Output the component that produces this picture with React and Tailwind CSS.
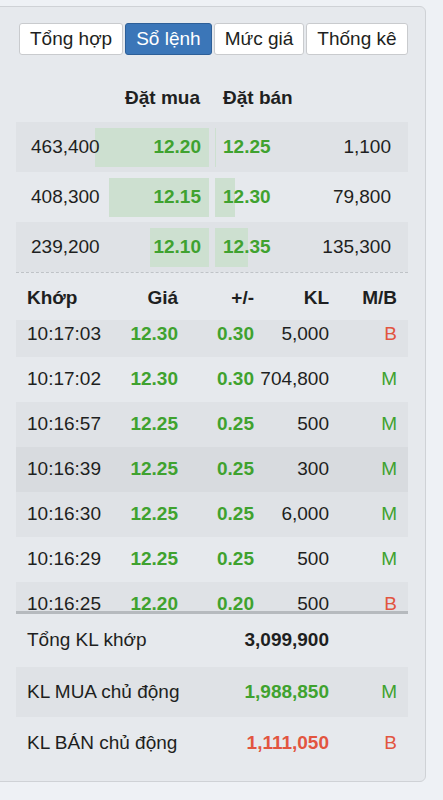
import React from 'react';

const GREEN = 'text-[#3fa22f]';
const RED = 'text-[#e2553f]';

const tabs = ['Tổng hợp', 'Sổ lệnh', 'Mức giá', 'Thống kê'];

const book = [
  { bidVol: 463400, bid: '12.20', ask: '12.25', askVol: 1100 },
  { bidVol: 408300, bid: '12.15', ask: '12.30', askVol: 79800 },
  { bidVol: 239200, bid: '12.10', ask: '12.35', askVol: 135300 },
];

const trades = [
  { t: '10:17:03', p: '12.30', c: '0.30', kl: '5,000', mb: 'B' },
  { t: '10:17:02', p: '12.30', c: '0.30', kl: '704,800', mb: 'M' },
  { t: '10:16:57', p: '12.25', c: '0.25', kl: '500', mb: 'M' },
  { t: '10:16:39', p: '12.25', c: '0.25', kl: '300', mb: 'M', hover: true },
  { t: '10:16:30', p: '12.25', c: '0.25', kl: '6,000', mb: 'M' },
  { t: '10:16:29', p: '12.25', c: '0.25', kl: '500', mb: 'M' },
  { t: '10:16:25', p: '12.20', c: '0.20', kl: '500', mb: 'B' },
];

const fmt = (n) => n.toLocaleString('en-US');
const barW = (v) => Math.max(1, Math.round((v / 785000) * 193));

const App = () => {
  return (
    <div className="min-h-[800px] overflow-hidden bg-[#eef1f5] pt-[6px] font-['Liberation_Sans',Arial,sans-serif] text-[19px] text-[#1e1f21]">
      {/* Panel */}
      <div className="-ml-[10px] h-[776px] w-[436px] rounded-[6px] border border-[#cfd2d6] bg-[#e6e9ed] pl-[25px] pr-[17px] pt-[16px]">
        {/* Tabs */}
        <div className="ml-[3px] flex gap-[2px]">
          {tabs.map((t, i) => (
            <div
              key={t}
              className={
                i === 1
                  ? 'flex h-[32px] items-center rounded-[3px] border border-[#2d5f98] bg-[#3b76b8] px-[10px] text-white'
                  : 'flex h-[32px] items-center rounded-[3px] border border-[#c9cbce] bg-white px-[10px]'
              }
            >
              {t}
            </div>
          ))}
        </div>

        {/* Order book header */}
        <div className="flex h-[67px] items-center gap-[6px] pt-[20px] font-bold">
          <div className="w-[193px] pr-[9px] text-right">Đặt mua</div>
          <div className="flex-1 pl-[8px]">Đặt bán</div>
        </div>

        {/* Order book */}
        <div className="border-b border-dashed border-[#bfc3c7]">
          {book.map((r, i) => (
            <div key={i} className={`flex h-[50px] gap-[6px] ${i % 2 === 0 ? 'bg-[#dfe2e6]' : ''}`}>
              <div className="relative flex w-[193px] items-center justify-between pl-[15px] pr-[8px]">
                <div className="absolute bottom-[5px] right-0 top-[6px] bg-[#cde0d0]" style={{ width: barW(r.bidVol) }} />
                <span className="relative">{fmt(r.bidVol)}</span>
                <span className={`relative font-bold ${GREEN}`}>{r.bid}</span>
              </div>
              <div className="relative flex flex-1 items-center justify-between pl-[8px] pr-[17px]">
                <div className="absolute bottom-[5px] left-0 top-[6px] bg-[#cde0d0]" style={{ width: barW(r.askVol) }} />
                <span className={`relative font-bold ${GREEN}`}>{r.ask}</span>
                <span className="relative">{fmt(r.askVol)}</span>
              </div>
            </div>
          ))}
        </div>

        {/* Trades header */}
        <div className="grid h-[47px] grid-cols-[80px_71px_76px_75px_68px] items-center px-[11px] pt-[3px] font-bold">
          <div>Khớp</div>
          <div className="text-right">Giá</div>
          <div className="text-right">+/-</div>
          <div className="text-right">KL</div>
          <div className="text-right">M/B</div>
        </div>

        {/* Trades list */}
        <div className="h-[294px] overflow-hidden border-b-[3px] border-[#b6babe]">
          <div className="-mt-[8px]">
            {trades.map((r, i) => (
              <div
                key={i}
                className={`grid h-[45px] grid-cols-[80px_71px_76px_75px_68px] items-center px-[11px] ${
                  r.hover ? 'bg-[#d8dbdf]' : i % 2 === 0 ? 'bg-[#dfe2e6]' : ''
                }`}
              >
                <div>{r.t}</div>
                <div className={`text-right font-bold ${GREEN}`}>{r.p}</div>
                <div className={`text-right font-bold ${GREEN}`}>{r.c}</div>
                <div className="text-right">{r.kl}</div>
                <div className={`text-right ${r.mb === 'M' ? GREEN : RED}`}>{r.mb}</div>
              </div>
            ))}
          </div>
        </div>

        {/* Summary */}
        <div className="flex h-[53px] items-center px-[11px]">
          <div className="flex-1">Tổng KL khớp</div>
          <div className="font-bold">3,099,900</div>
          <div className="w-[68px]" />
        </div>
        <div className="flex h-[50px] items-center bg-[#dfe2e6] px-[11px]">
          <div className="flex-1">KL MUA chủ động</div>
          <div className={`font-bold ${GREEN}`}>1,988,850</div>
          <div className={`w-[68px] text-right ${GREEN}`}>M</div>
        </div>
        <div className="flex h-[50px] items-center px-[11px] pt-[2px]">
          <div className="flex-1">KL BÁN chủ động</div>
          <div className={`font-bold ${RED}`}>1,111,050</div>
          <div className={`w-[68px] text-right ${RED}`}>B</div>
        </div>
      </div>
    </div>
  );
};

export default App;
